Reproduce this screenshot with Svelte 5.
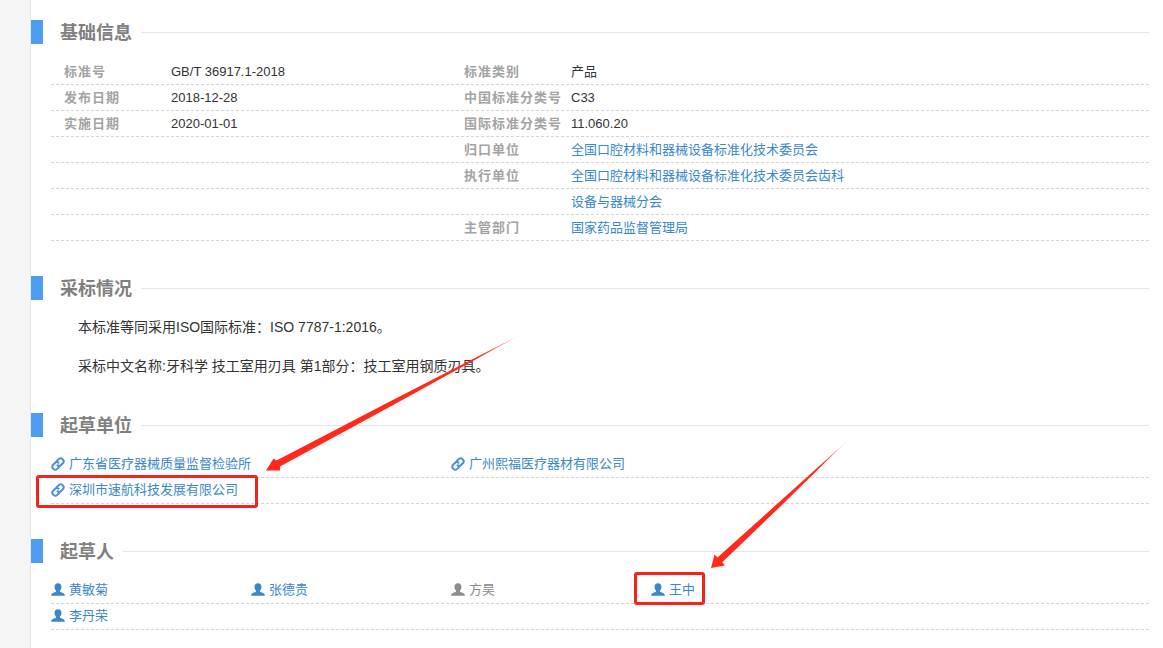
<script>
  const info = [
    ['标准号', 'GB/T 36917.1-2018', '标准类别', '产品', false],
    ['发布日期', '2018-12-28', '中国标准分类号', 'C33', false],
    ['实施日期', '2020-01-01', '国际标准分类号', '11.060.20', false],
    ['', '', '归口单位', '全国口腔材料和器械设备标准化技术委员会', true],
    ['', '', '执行单位', '全国口腔材料和器械设备标准化技术委员会齿科', true],
    ['', '', '', '设备与器械分会', true],
    ['', '', '主管部门', '国家药品监督管理局', true]
  ];
  const units = [
    ['广东省医疗器械质量监督检验所', '广州熙福医疗器材有限公司'],
    ['深圳市速航科技发展有限公司']
  ];
  const people = [
    [['黄敏菊', true], ['张德贵', true], ['方昊', false], ['王中', true]],
    [['李丹荣', true]]
  ];
</script>

<div class="page">
  <section>
    <header class="head"><i class="mark"></i><h2>基础信息</h2><i class="rule"></i></header>
    {#each info as [l1, v1, l2, v2, link]}
      <div class="row">
        <div class="cell wide"><span class="label">{l1}</span><span class="value">{v1}</span></div>
        <div class="cell wide"><span class="label">{l2}</span><span class="value" class:blue={link}>{v2}</span></div>
      </div>
    {/each}
  </section>

  <section>
    <header class="head"><i class="mark"></i><h2>采标情况</h2><i class="rule"></i></header>
    <p>本标准等同采用ISO国际标准：ISO 7787-1:2016。</p>
    <p>采标中文名称:牙科学 技工室用刃具 第1部分：技工室用钢质刃具。</p>
  </section>

  <section>
    <header class="head"><i class="mark"></i><h2>起草单位</h2><i class="rule"></i></header>
    {#each units as row}
      <div class="row">
        {#each row as u}
          <div class="cell wide item blue">
            <svg class="ico" viewBox="0 0 14 14" aria-hidden="true"><g fill="none" stroke="#4a90d6" stroke-width="2" stroke-linecap="round"><path d="M5.600 4.300 8 1.900a2.300 2.300 0 0 1 3.300 0l.8.800a2.300 2.300 0 0 1 0 3.300L9.800 8.300a2.300 2.300 0 0 1-3.300 0"/><path d="M8.400 9.700 6 12.100a2.300 2.300 0 0 1-3.300 0l-.8-.8a2.300 2.300 0 0 1 0-3.300L4.200 5.700a2.300 2.300 0 0 1 3.300 0"/></g></svg>
            <span class="txt">{u}</span>
          </div>
        {/each}
      </div>
    {/each}
  </section>

  <section>
    <header class="head"><i class="mark"></i><h2>起草人</h2><i class="rule"></i></header>
    {#each people as row}
      <div class="row">
        {#each row as [name, active]}
          <div class="cell narrow item" class:blue={active} class:grey={!active}>
            <svg class="ico" viewBox="0 0 14 14" aria-hidden="true"><path fill="currentColor" d="M7 .3c2.200 0 3.500 1.600 3.500 3.700 0 1.500-.7 2.900-1.500 3.600v1.100c1.500.7 3.700 1 4.400 2.200.3.500.4 1.200.4 1.800H.2c0-.6.100-1.300.4-1.800.7-1.200 2.900-1.500 4.400-2.200V7.600C4.200 6.900 3.500 5.500 3.500 4 3.500 1.900 4.800.3 7 .3z"/></svg>
            <span class="txt">{name}</span>
          </div>
        {/each}
      </div>
    {/each}
  </section>

  <div class="box box-unit"></div>
  <div class="box box-person"></div>
  <svg class="arrows" viewBox="0 0 1163 648" aria-hidden="true">
    <defs>
      <linearGradient id="fade1" gradientUnits="userSpaceOnUse" x1="520" y1="335" x2="480" y2="356"><stop offset="0" stop-color="#ff2a1c" stop-opacity=".2"/><stop offset="1" stop-color="#ff2a1c"/></linearGradient>
      <linearGradient id="fade2" gradientUnits="userSpaceOnUse" x1="847" y1="441" x2="820" y2="467"><stop offset="0" stop-color="#ff2a1c" stop-opacity=".2"/><stop offset="1" stop-color="#ff2a1c"/></linearGradient>
    </defs>
    <polygon fill="url(#fade1)" points="520,335 393.200,405 280,466.500 280,470.500 266,470.500 273.500,458.500 276.500,460.500 390.800,400.900"/>
    <polygon fill="url(#fade2)" points="847,441 780.400,506.500 722.200,562.200 725,565.500 711,568 714.500,554.500 717.500,557.500 777.600,503.500"/>
  </svg>
</div>

<style>
  :global(body) { margin: 0; background: #f5f5f5; }
  .page {
    position: relative;
    box-sizing: border-box;
    height: 648px;
    margin-left: 30px;
    padding: 20px 14px 0 0;
    background: #fff;
    border-left: 1px solid #e6e6e6;
    overflow: hidden;
    font: 13px/25px "Liberation Sans", "Noto Sans CJK SC", sans-serif;
    color: #333;
  }
  section { margin-bottom: 35px; }
  .head { display: flex; align-items: center; height: 24px; margin-bottom: 15px; }
  .mark { width: 12px; height: 24px; background: #4f9df0; }
  h2 { margin: 0 9px 0 17px; padding-top: 2px; font-size: 18px; font-weight: 700; color: #808080; line-height: 24px; }
  .rule { flex: 1; height: 1px; background: #e6e6e6; }
  .row {
    box-sizing: border-box;
    display: flex;
    height: 26px;
    margin-left: 20px;
    border-bottom: 1px dashed #d5d5d5;
  }
  .cell { display: flex; height: 25px; }
  .wide { width: 400px; }
  .narrow { width: 200px; }
  .label { width: 120px; padding-left: 13px; box-sizing: border-box; font-weight: 700; color: #a3a3a3; letter-spacing: 1px; flex: none; }
  .value { flex: 1; }
  .blue { color: #3a87c9; }
  .grey { color: #8c8c8c; }
  .item { align-items: center; gap: 4px; }
  .ico { width: 14px; height: 14px; flex: none; margin-top: -1px; }
  .txt { margin-top: -2px; }
  p { margin: 0 0 15px; padding-left: 47px; font-size: 14px; line-height: 24px; color: #333; }
  p:last-child { margin-bottom: 0; }
  .box {
    position: absolute;
    box-sizing: border-box;
    border: 3px solid #f5231b;
    border-radius: 3px;
  }
  .box-unit { left: 5px; top: 475px; width: 222px; height: 33px; }
  .box-person { left: 603px; top: 572px; width: 71px; height: 33px; }
  .arrows { position: absolute; left: -31px; top: 0; width: 1163px; height: 648px; pointer-events: none; }
</style>
